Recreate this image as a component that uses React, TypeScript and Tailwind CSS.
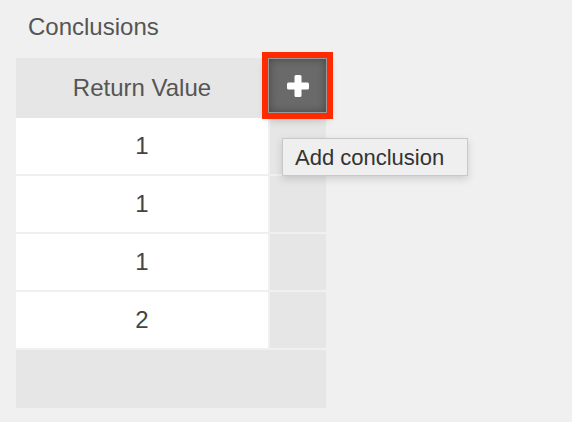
import React from 'react';

const rows = ['1', '1', '1', '2'];

function PlusIcon() {
    return (
        <svg width="22" height="22" viewBox="0 0 22 22">
            <rect x="7.5" y="0" width="7" height="22" rx="1.5" fill="#fff" />
            <rect x="0" y="7.5" width="22" height="7" rx="1.5" fill="#fff" />
        </svg>
    );
}

export default function App() {
    return (
        <div className="w-[572px] h-[422px] bg-[#f0f0f0] pl-4 pt-[13px] relative font-['Liberation_Sans',Arial,sans-serif]">
            {/* Title */}
            <div className="pl-[12px] text-[24px] leading-[28px] text-[#555]">Conclusions</div>

            {/* Table */}
            <div className="mt-[17px] w-[310px] flex flex-col">
                {/* Header */}
                <div className="h-[60px] bg-[#e6e6e6] flex">
                    <div className="w-[252px] flex items-center justify-center text-[24px] text-[#555]">
                        Return Value
                    </div>
                    <div className="w-[58px] relative">
                        <button className="absolute left-0 top-0 w-[59px] h-[55px] bg-[#6a6a6a] border border-[#9a9a9a] outline-[6px] outline-solid outline-[#ff2a00] shadow-[inset_0_0_8px_rgba(0,0,0,0.35),0_5px_10px_rgba(0,0,0,0.3)] flex items-center justify-center">
                            <PlusIcon />
                        </button>
                    </div>
                </div>

                {/* Rows */}
                <div className="flex flex-col gap-[2px]">
                    {rows.map((v, i) => (
                        <div key={i} className="h-[56px] flex gap-[2px]">
                            <div className="w-[252px] bg-white flex items-center justify-center text-[24px] text-[#444]">
                                {v}
                            </div>
                            <div className="flex-1 bg-[#e6e6e6]"></div>
                        </div>
                    ))}
                    <div className="h-[58px] bg-[#e6e6e6]"></div>
                </div>
            </div>

            {/* Tooltip */}
            <div className="absolute left-[282px] top-[138px] w-[186px] h-[38px] bg-[#efefef] border border-[#c8c8c8] shadow-[0_3px_8px_rgba(0,0,0,0.15)] flex items-center pl-[12px] text-[22px] text-[#333]">
                Add conclusion
            </div>
        </div>
    );
}
